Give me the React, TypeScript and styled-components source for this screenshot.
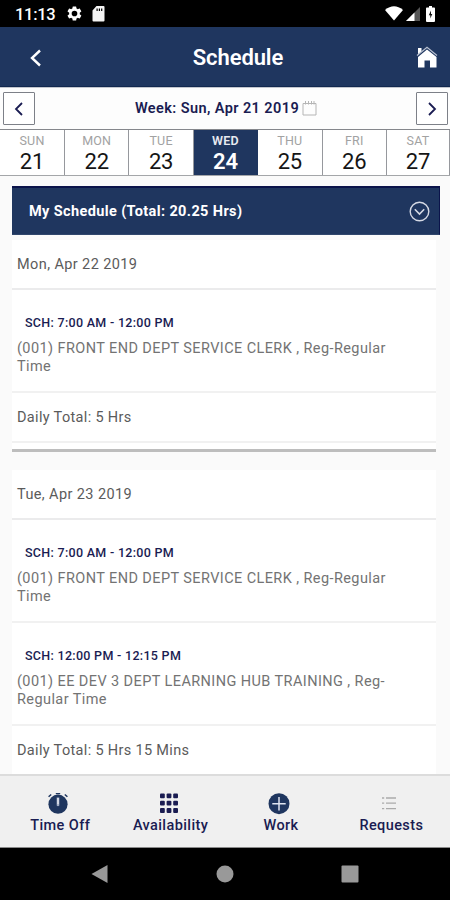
import React from "react";
import styled, { createGlobalStyle } from "styled-components";

const NAVY = "#1f365f";
const INK = "#1a1c52";

const Global = createGlobalStyle`
  * { box-sizing: border-box; }
  body { margin: 0; background: #fafafa; font-family: Roboto, "Liberation Sans", sans-serif; }
  svg { display: block; }
  button { font: inherit; padding: 0; margin: 0; border: 0; background: none; color: inherit; }
`;

const Screen = styled.div`
  width: 450px;
  height: 900px;
  display: flex;
  flex-direction: column;
  overflow: hidden;
  background: #fafafa;
`;

const StatusBar = styled.div`
  flex: none;
  height: 27px;
  background: #000;
  color: #fff;
  display: flex;
  align-items: center;
  padding: 0 15px 0 15px;
`;

const Clock = styled.span`
  font-size: 16.5px;
  font-weight: 500;
  letter-spacing: -0.3px;
  line-height: 20px;
  width: 51px;
  padding-top: 2px;
`;

const StatusIcons = styled.div<{ $gap: number; $end?: boolean }>`
  display: flex;
  align-items: center;
  gap: ${(p) => p.$gap}px;
  margin-left: ${(p) => (p.$end ? "auto" : "0")};
`;

const Header = styled.header`
  flex: none;
  height: 60px;
  background: ${NAVY};
  border-bottom: 1px solid #12284f;
  display: grid;
  grid-template-columns: 80px 1fr 80px;
  align-items: center;
  color: #fff;
`;

const HeaderButton = styled.button<{ $end?: boolean }>`
  display: flex;
  justify-content: ${(p) => (p.$end ? "flex-end" : "flex-start")};
  padding: ${(p) => (p.$end ? "0 12px 0 0" : "2px 0 0 29px")};
`;

const Title = styled.h1`
  margin: 0;
  padding: 2px 0 0 26px;
  text-align: center;
  font-size: 22px;
  font-weight: 600;
  letter-spacing: -0.1px;
`;

const WeekBar = styled.div`
  flex: none;
  height: 42px;
  background: #fdfdfd;
  border-top: 1px solid #c3c7cf;
  display: flex;
  align-items: center;
  justify-content: space-between;
  padding: 0 2px 0 3px;
`;

const StepButton = styled.button`
  width: 32px;
  height: 33px;
  border: 1px solid #7d8088;
  border-radius: 1px;
  background: #fff;
  display: flex;
  align-items: center;
  justify-content: center;
`;

const WeekLabel = styled.div`
  display: flex;
  align-items: center;
  gap: 3px;
  padding-left: 1px;
  color: ${INK};
  font-size: 14.5px;
  font-weight: 600;
  letter-spacing: 0.41px;
  white-space: nowrap;
`;

const Days = styled.div`
  flex: none;
  height: 47px;
  display: grid;
  grid-template-columns: 65px repeat(5, 64.4px) 63px;
  grid-template-rows: 45px;
  border-top: 1px solid #85878c;
  border-bottom: 1px solid #a4a6a9;
`;

const Day = styled.div<{ $active?: boolean }>`
  display: flex;
  flex-direction: column;
  align-items: center;
  min-height: 0;
  background: ${(p) => (p.$active ? NAVY : "#fff")};
  border-right: 1px solid ${(p) => (p.$active ? NAVY : "#96989d")};
  color: ${(p) => (p.$active ? "#fff" : "#151515")};
`;

const DayName = styled.span<{ $active?: boolean }>`
  margin-top: 3px;
  font-size: 12.5px;
  line-height: 15px;
  font-weight: ${(p) => (p.$active ? 600 : 400)};
  letter-spacing: 0.2px;
  color: ${(p) => (p.$active ? "#e8eaf0" : "#a2a2a2")};
`;

const DayNumber = styled.span<{ $active?: boolean }>`
  font-size: 22px;
  line-height: 28px;
  font-weight: ${(p) => (p.$active ? 600 : 400)};
  letter-spacing: -0.2px;
`;

const Content = styled.main`
  flex: none;
  height: 598px;
  overflow: hidden;
  padding: 10px 10px 0 12px;
`;

const Panel = styled.div`
  height: 49px;
  background: ${NAVY};
  border-top: 2px solid #0b144b;
  border-right: 1px solid #0b144b;
  border-bottom: 1px solid #30466c;
  color: #fff;
  display: flex;
  align-items: center;
  justify-content: space-between;
  padding: 0 9px 0 17px;
  font-size: 14.5px;
  font-weight: 700;
  letter-spacing: 0.38px;
`;

const DayCard = styled.section<{ $first?: boolean }>`
  width: 424px;
  background: #fff;
  margin-top: ${(p) => (p.$first ? 5 : 18)}px;
`;

const CardDate = styled.div`
  height: 50px;
  padding: 16px 5px 0;
  border-bottom: 2px solid #ebebec;
  font-size: 14.5px;
  line-height: 17px;
  letter-spacing: 0.4px;
  color: #5b5b5b;
`;

const Shift = styled.div`
  height: 103px;
  padding: 25px 5px 0;
  border-bottom: 2px solid #f1f1f1;
`;

const ShiftTime = styled.div`
  padding-left: 8px;
  font-size: 12.5px;
  font-weight: 500;
  line-height: 16px;
  letter-spacing: 0.3px;
  color: ${INK};
`;

const ShiftRole = styled.div`
  margin-top: 9px;
  font-size: 14.5px;
  line-height: 17.5px;
  letter-spacing: 0.41px;
  color: #737373;
  white-space: pre;
`;

const DailyTotal = styled.div`
  height: 50px;
  padding: 16px 5px 0;
  border-bottom: 2px solid #f1f1f1;
  font-size: 14.5px;
  line-height: 17px;
  letter-spacing: 0.33px;
  color: #5b5b5b;
`;

const CardEnd = styled.div`
  height: 9px;
  border-bottom: 3px solid #bdbdbd;
`;

const TabBar = styled.nav`
  flex: none;
  height: 74px;
  background: #f0f0f0;
  border-top: 2px solid #dcdcdc;
  border-bottom: 1px solid #8a8a8a;
  display: grid;
  grid-template-columns: repeat(4, 110.4px);
  padding-left: 5px;
`;

const Tab = styled.button`
  display: flex;
  flex-direction: column;
  align-items: center;
  padding-top: 17px;
  color: ${INK};
  font-size: 14.5px;
  font-weight: 500;
  line-height: 18px;
  letter-spacing: 0.4px;
`;

const TabIcon = styled.span`
  height: 24px;
  padding-right: 4px;
`;

const SystemNav = styled.div`
  flex: none;
  height: 52px;
  background: #000;
  display: flex;
  justify-content: space-between;
  align-items: center;
  padding: 0 91px 0 91px;
`;

const Chevron = ({ size, color, flip, stroke }: { size: number; color: string; flip?: boolean; stroke: number }) => (
  <svg width={size} height={size} viewBox="0 0 18 18" fill="none" stroke={color} strokeWidth={stroke}>
    <path d={flip ? "M6 3l6 6-6 6" : "M12 3L6 9l6 6"} />
  </svg>
);

const Gear = () => (
  <svg width="17" height="17" viewBox="0 0 24 24" fill="#fff">
    <path d="M19.4 13a7.8 7.8 0 0 0 0-2l2.1-1.7a.5.5 0 0 0 .1-.6l-2-3.5a.5.5 0 0 0-.6-.2l-2.5 1a7.3 7.3 0 0 0-1.7-1L14.4 2.4a.5.5 0 0 0-.5-.4h-4a.5.5 0 0 0-.5.4L9 5a7.7 7.7 0 0 0-1.7 1l-2.5-1a.5.5 0 0 0-.6.2l-2 3.5a.5.5 0 0 0 .1.6L4.5 11a8 8 0 0 0 0 2l-2.2 1.7a.5.5 0 0 0-.1.6l2 3.5c.1.2.4.3.6.2l2.5-1a7.3 7.3 0 0 0 1.7 1l.4 2.6c0 .2.2.4.5.4h4c.2 0 .5-.2.5-.4l.4-2.6a7.3 7.3 0 0 0 1.7-1l2.5 1c.2.1.5 0 .6-.2l2-3.5a.5.5 0 0 0-.1-.6zM12 16a4 4 0 1 1 0-8 4 4 0 0 1 0 8z" />
  </svg>
);

const SdCard = () => (
  <svg width="13" height="16" viewBox="0 0 13 16" fill="#f4f4f4" fillRule="evenodd">
    <path d="M4.5 0H11.5Q12.5 0 12.5 1V14.5Q12.5 15.5 11.5 15.5H1.5Q.5 15.5 .5 14.5V4.5zM4.5 2.5V5H5.7V2.5zM6.8 2.5V5H8V2.5zM9.1 2.5V5H10.3V2.5z" />
  </svg>
);

const Wifi = () => (
  <svg width="18" height="15" viewBox="0 0 18 15" fill="#fff">
    <path d="M0 4Q9-3.5 18 4L9 14.5z" />
  </svg>
);

const Signal = () => (
  <svg width="14" height="14" viewBox="0 0 14 14">
    <path d="M14 0V14H0z" fill="#555" />
    <path d="M8.5 5.5V14H0z" fill="#fff" />
  </svg>
);

const Battery = () => (
  <svg width="9" height="16" viewBox="0 0 9 16">
    <path d="M3 0H6V1.5H8.2Q9 1.5 9 2.5V15Q9 16 8 16H1Q0 16 0 15V2.5Q0 1.5 .8 1.5H3z" fill="#fff" />
    <path d="M5 4.5L2.8 9.3H4.3V12.5L6.3 8H5z" fill="#111" />
  </svg>
);

const Home = () => (
  <svg width="22" height="22" viewBox="0 0 22 22">
    <path d="M2 2H5.5V5.5L2 8.5z" fill="#fff" />
    <path d="M11 3.5L20.5 11V21.5H14V14.5H8.5V21.5H2V11z" fill="#fff" />
    <path d="M1 9.5L11 1.2 21 9.5" fill="none" stroke="#b9c1d0" strokeWidth="1.2" />
  </svg>
);

const Calendar = () => (
  <svg width="15" height="15" viewBox="0 0 15 15" fill="none" stroke="#b5b5b5" strokeWidth="1">
    <path d="M1 2.5H14V14H1zM3.5 0V3.5M6.5 0V3.5M9.5 0V3.5M12 0V3.5" />
  </svg>
);

const CircleDown = () => (
  <svg width="21" height="21" viewBox="0 0 21 21" fill="none" stroke="#d5d9e4" strokeWidth="1.4">
    <circle cx="10.5" cy="10.5" r="9.3" />
    <path d="M5.8 8.2L10.5 13l4.7-4.8" strokeWidth="1.6" />
  </svg>
);

const Stopwatch = () => (
  <svg width="20" height="21" viewBox="0 0 20 21">
    <circle cx="10" cy="11.2" r="9.6" fill={NAVY} />
    <path d="M7.8 .6H12.2M.6 3.8L3.2 1.5M19.4 3.8L16.8 1.5" stroke={NAVY} strokeWidth="1.5" />
    <path d="M8.7 4.5H11.3V12.5Q10 14 8.7 12.5z" fill="#a7b2c8" />
    <path d="M10 5V11" stroke="#fff" strokeWidth="1" />
  </svg>
);

const GridDots = () => (
  <svg width="18" height="21" viewBox="0 0 18 21" fill={INK}>
    {[0.5, 7.8, 15.1].map((y) => [0, 6.6, 13.2].map((x) => (
      <rect key={`${x}-${y}`} x={x} y={y} width="4.8" height="4.8" rx="1" />
    )))}
  </svg>
);

const PlusCircle = () => (
  <svg width="22" height="22" viewBox="0 0 22 22">
    <circle cx="11" cy="10.7" r="10.5" fill={NAVY} />
    <path d="M11 4V17.4M4.3 10.7H17.7" stroke="#dfe4f0" strokeWidth="1.5" />
  </svg>
);

const ListLines = () => (
  <svg width="14" height="21" viewBox="0 0 14 21" stroke="#aaa" strokeWidth="1.3">
    <path d="M0 5H2.2M4 5H14M0 10.2H2.2M4 10.2H14M0 15.6H2.2M4 15.6H14" />
  </svg>
);

const week = [
  ["SUN", 21], ["MON", 22], ["TUE", 23], ["WED", 24], ["THU", 25], ["FRI", 26], ["SAT", 27],
] as const;

const clerk = "(001) FRONT END DEPT SERVICE CLERK , Reg-Regular\nTime";

const schedule = [
  {
    date: "Mon, Apr 22 2019",
    total: "5 Hrs",
    shifts: [{ time: "7:00 AM - 12:00 PM", role: clerk }],
  },
  {
    date: "Tue, Apr 23 2019",
    total: "5 Hrs 15 Mins",
    shifts: [
      { time: "7:00 AM - 12:00 PM", role: clerk },
      { time: "12:00 PM - 12:15 PM", role: "(001) EE DEV 3 DEPT LEARNING HUB TRAINING , Reg-\nRegular Time" },
    ],
  },
];

const tabs = [
  { label: "Time Off", icon: <Stopwatch /> },
  { label: "Availability", icon: <GridDots /> },
  { label: "Work", icon: <PlusCircle /> },
  { label: "Requests", icon: <ListLines /> },
];

export default function App() {
  return (
    <Screen>
      <Global />
      <StatusBar>
        <Clock>11:13</Clock>
        <StatusIcons $gap={9}><Gear /><SdCard /></StatusIcons>
        <StatusIcons $gap={3} $end><Wifi /><Signal /><span /><Battery /></StatusIcons>
      </StatusBar>
      <Header>
        <HeaderButton aria-label="Back">
          <svg width="14" height="18" viewBox="0 0 14 18" fill="none" stroke="#fff" strokeWidth="2.4">
            <path d="M11 1.5L3 9l8 7.5" />
          </svg>
        </HeaderButton>
        <Title>Schedule</Title>
        <HeaderButton $end aria-label="Home"><Home /></HeaderButton>
      </Header>
      <WeekBar>
        <StepButton aria-label="Previous week"><Chevron size={18} color={INK} stroke={1.8} /></StepButton>
        <WeekLabel>Week: Sun, Apr 21 2019<Calendar /></WeekLabel>
        <StepButton aria-label="Next week"><Chevron size={18} color={INK} stroke={1.8} flip /></StepButton>
      </WeekBar>
      <Days>
        {week.map(([name, num]) => (
          <Day key={name} $active={num === 24}>
            <DayName $active={num === 24}>{name}</DayName>
            <DayNumber $active={num === 24}>{num}</DayNumber>
          </Day>
        ))}
      </Days>
      <Content>
        <Panel>My Schedule (Total: 20.25 Hrs)<CircleDown /></Panel>
        {schedule.map((day, i) => (
          <DayCard key={day.date} $first={i === 0}>
            <CardDate>{day.date}</CardDate>
            {day.shifts.map((s) => (
              <Shift key={s.time}>
                <ShiftTime>SCH: {s.time}</ShiftTime>
                <ShiftRole>{s.role}</ShiftRole>
              </Shift>
            ))}
            <DailyTotal>Daily Total: {day.total}</DailyTotal>
            <CardEnd />
          </DayCard>
        ))}
      </Content>
      <TabBar>
        {tabs.map((t) => (
          <Tab key={t.label}><TabIcon>{t.icon}</TabIcon>{t.label}</Tab>
        ))}
      </TabBar>
      <SystemNav>
        <svg width="17" height="18" viewBox="0 0 17 18" fill="#999"><path d="M16.5 0V18L.5 9z" /></svg>
        <svg width="18" height="18" viewBox="0 0 18 18" fill="#999"><circle cx="9" cy="9" r="8.5" /></svg>
        <svg width="18" height="18" viewBox="0 0 18 18" fill="#999"><rect x=".5" y=".5" width="17" height="17" rx="1" /></svg>
      </SystemNav>
    </Screen>
  );
}
